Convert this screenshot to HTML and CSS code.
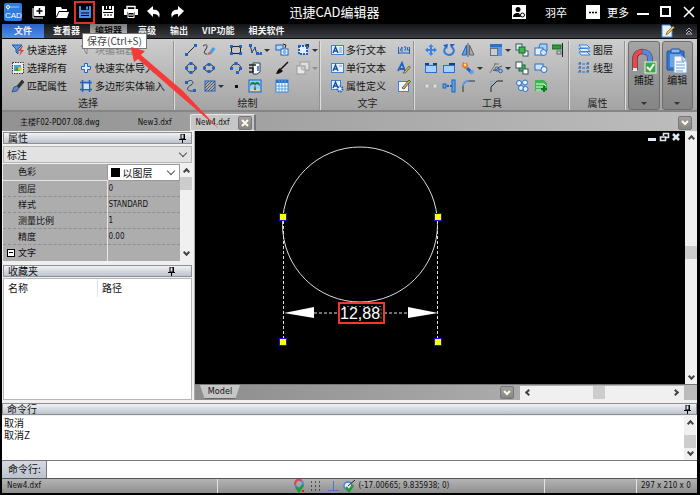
FILE: index.html
```
<!DOCTYPE html>
<html lang="zh-CN">
<head>
    <meta charset="UTF-8">
    <meta name="viewport" content="width=device-width, initial-scale=1.0">
    <title>迅捷CAD编辑器</title>
    <link rel="stylesheet" href="styles.css">
</head>
<body>
    <header class="titlebar">
        <div class="quick">
            <svg class="logo" width="18" height="18" viewBox="0 0 18 18"><rect width="18" height="18" rx="2" fill="#2f7de0"/><path d="M4 4h11M4 4v3" stroke="#9cc8ff" fill="none"/><circle cx="4" cy="4" r="1.500" fill="#2f7de0" stroke="#fff"/><text x="1" y="15" font-size="8" fill="#fff">CAD</text></svg>
            <button type="button" title="新建"><svg width="14" height="14" viewBox="0 0 14 14"><path d="M1 3v10h10" stroke="#fff" fill="none"/><rect x="2" y="1" width="11" height="10" rx="1" fill="#fff"/><path d="M7.500 3v6M4.500 6h6" stroke="#000" stroke-width="1.500"/></svg></button>
            <button type="button" title="打开"><svg width="14" height="14" viewBox="0 0 14 14"><path d="M1 12V2h5l1 2h5v2H4z" fill="#fff"/><path d="M4 7h10l-2 6H1z" fill="#fff"/><path d="M1.500 12L4 6.500h9" stroke="#000" stroke-width=".7" fill="none"/></svg></button>
            <button type="button" title="保存" class="marked"><svg width="14" height="14" viewBox="0 0 14 14"><rect x="1" y="1" width="12" height="12" fill="#4b8bf0"/><rect x="3" y="1" width="8" height="4" fill="#000"/><rect x="8" y="1.500" width="2" height="3" fill="#4b8bf0"/><path d="M3 8h8M3 10.500h8" stroke="#000"/></svg></button>
            <button type="button" title="另存为"><svg width="14" height="14" viewBox="0 0 14 14"><rect x="1" y="1" width="12" height="12" fill="#fff"/><rect x="3" y="1" width="8" height="4" fill="#000"/><rect x="5" y="1" width="1" height="3" fill="#fff"/><rect x="8" y="1" width="2" height="3" fill="#fff"/><path d="M2 7.500h10M3 10h2M6 10h2M9 10h2" stroke="#000"/></svg></button>
            <button type="button" title="打印"><svg width="14" height="14" viewBox="0 0 14 14"><path d="M3 4V1.500h8V4" stroke="#fff" fill="none" stroke-width="1.400"/><path d="M0 4h14v6h-3V7H3v3H0z" fill="#fff"/><rect x="4" y="7.500" width="6" height="5" fill="#000" stroke="#fff"/><path d="M5 10h4" stroke="#fff"/></svg></button>
            <button type="button" title="撤销"><svg width="14" height="14" viewBox="0 0 14 14"><path d="M0 6l6-5v3.500c5 0 8 3 6 8.500-.5-3-2-4-6-4v3z" fill="#fff"/></svg></button>
            <button type="button" title="重做"><svg width="14" height="14" viewBox="0 0 14 14"><path d="M14 6L8 1v3.500c-5 0-8 3-6 8.500.5-3 2-4 6-4v3z" fill="#fff"/></svg></button>
        </div>
        <h1>迅捷CAD编辑器</h1>
        <div class="account">
            <svg width="14" height="14" viewBox="0 0 14 14"><rect width="14" height="14" fill="#fff"/><circle cx="6" cy="4.500" r="2.500" fill="#000"/><path d="M1 12c0-3 2-4 4-4h2l2 4z" fill="#000"/><circle cx="10.500" cy="10" r="2" fill="#fff" stroke="#000"/></svg>
            <span class="user">羽卒</span>
            <svg width="14" height="14" viewBox="0 0 14 14"><rect width="14" height="14" fill="#fff"/><path d="M3 7.500h2M6 7.500h2M9 7.500h2" stroke="#000" stroke-width="1.500"/></svg>
            <span>更多</span>
        </div>
        <div class="window-buttons">
            <button type="button" aria-label="最小化"><svg width="12" height="12" viewBox="0 0 12 12"><path d="M0 8h12" stroke="#fff" stroke-width="2"/></svg></button>
            <button type="button" aria-label="最大化"><svg width="12" height="12" viewBox="0 0 12 12"><rect x="1" y="1" width="9" height="9" fill="none" stroke="#fff" stroke-width="2"/></svg></button>
            <button type="button" aria-label="关闭"><svg width="12" height="12" viewBox="0 0 12 12"><path d="M1 1l10 10M11 1L1 11" stroke="#fff" stroke-width="1.500"/></svg></button>
        </div>
    </header>

    <nav class="menu">
        <a href="#" class="file">文件</a>
        <a href="#">查看器</a>
        <a href="#" class="current">编辑器</a>
        <a href="#">高级</a>
        <a href="#">输出</a>
        <a href="#">VIP功能</a>
        <a href="#">相关软件</a>
        <div class="menu-end">
            <svg width="14" height="14" viewBox="0 0 14 14"><path d="M1 1h8l2 3v9H1z" fill="#e8f2ff" stroke="#4b8bd8"/><path d="M5 11l1-3 6-6 1.500 1.500-6 6z" fill="#f0c040" stroke="#5a4a20" stroke-width=".6"/></svg>
            <svg width="8" height="8" viewBox="0 0 8 8"><path d="M1 4l3-3 3 3M1 7l3-3 3 3z" fill="none" stroke="#bbb" stroke-width=".9"/></svg>
        </div>
    </nav>

    <section class="ribbon">
        <div class="group group-select">
            <div class="tools">
                <button type="button"><svg width="14" height="14" viewBox="0 0 14 14"><path d="M1 2h10L7 6v5L5 9V6z" fill="#4f9be0" stroke="#1c5ba6"/><path d="M11 3L7 8h3l-2 5 5-6h-3l2-4z" fill="#e23a3a"/></svg>快速选择</button>
                <button type="button" disabled><svg width="14" height="14" viewBox="0 0 14 14"><path d="M2 3h9L8 7v4L6 9V7z" fill="none" stroke="#888"/></svg>块编辑器</button>
                <button type="button"><svg width="14" height="14" viewBox="0 0 14 14"><rect x="1.500" y="1.500" width="11" height="11" fill="#eee" stroke="#333" stroke-dasharray="1.500 1"/><rect x="3" y="4" width="7" height="6" fill="#49a2e8"/><path d="M3 10l3-4 3 4z" fill="#3a9a3a"/><circle cx="9" cy="8" r="2" fill="#e6c830"/></svg>选择所有</button>
                <button type="button"><svg width="14" height="14" viewBox="0 0 14 14"><path d="M5.500 2.500h3v3h3v3h-3v3h-3v-3h-3v-3h3z" fill="#dcecff" stroke="#2266c0"/></svg>快速实体导入</button>
                <button type="button"><svg width="14" height="14" viewBox="0 0 14 14"><path d="M6 7l5-6 2 2-5 6z" fill="#333" stroke="#111" stroke-width=".5"/><path d="M1 13l2-5 3-1 2 2-2 3z" fill="#5c86c4" stroke="#263f6e" stroke-width=".7"/></svg>匹配属性</button>
                <button type="button"><svg width="14" height="14" viewBox="0 0 14 14"><path d="M3.500 1v12M10.500 1v12M1 3.500h12M1 10.500h12" stroke="#1f62c4" stroke-width="1.500"/><rect x="5" y="5" width="5" height="5" fill="#cfe4fb"/></svg>多边形实体输入</button>
            </div>
            <div class="caption">选择</div>
        </div>

        <div class="group group-draw">
            <div class="tools">
                <button type="button" title="直线"><svg width="14" height="14" viewBox="0 0 14 14"><path d="M3 11l8-8" stroke="#222"/><rect x="1" y="10" width="3" height="3" fill="#1f62c4"/><rect x="10" y="1" width="3" height="3" fill="#1f62c4"/></svg></button>
                <button type="button" title="手绘"><svg width="14" height="14" viewBox="0 0 14 14"><path d="M1 3c4-3 5 0 3 3s-3 5 1 5" stroke="#333" fill="none"/><path d="M7 9l4-5 2.500 2-4 5z" fill="#4b9be8"/><path d="M5 12l2-3 2.500 2z" fill="#e24a3a"/></svg></button>
                <button type="button" title="矩形"><svg width="14" height="14" viewBox="0 0 14 14"><rect x="2.500" y="3.500" width="9" height="7" fill="none" stroke="#222"/><path d="M1 2h3v3H1zM10 2h3v3h-3zM1 9h3v3H1zM10 9h3v3h-3z" fill="#1f62c4"/></svg></button>
                <button type="button" title="多段线"><svg width="14" height="14" viewBox="0 0 14 14"><path d="M2 2l2 7 3-4 2 6h4" stroke="#333" fill="none"/><path d="M1 1h3v3H1zM3 8h2v2H3zM6 4h2v2H6zM8 9h3v3H8zM12 9h2v3h-2z" fill="#1f62c4"/></svg><i class="caret"></i></button>
                <button type="button" title="块"><svg width="14" height="14" viewBox="0 0 14 14"><rect x="1" y="2" width="7" height="5" fill="#b8d8f8" stroke="#1f62c4"/><rect x="6" y="6" width="7" height="6" fill="#fff" stroke="#1f62c4"/><circle cx="9.500" cy="9" r="2" fill="#77b4ee"/><path d="M8 1l3 1-1 3" stroke="#223" fill="none"/></svg></button>
                <button type="button" title="云线"><svg width="14" height="14" viewBox="0 0 14 14"><rect x="3" y="3" width="8" height="8" fill="#e5f1fd" stroke="#1f62c4" stroke-width="2" stroke-dasharray="2 1"/><path d="M9 1l4 4V1z" fill="#15397a"/></svg><i class="caret"></i></button>

                <button type="button" title="圆"><svg width="14" height="14" viewBox="0 0 14 14"><circle cx="7" cy="7" r="4.500" fill="none" stroke="#333"/><path d="M5.500 1h3v3h-3zM5.500 10h3v3h-3zM1 5.500h3v3H1zM10 5.500h3v3h-3z" fill="#1f62c4"/></svg></button>
                <button type="button" title="椭圆"><svg width="14" height="14" viewBox="0 0 14 14"><ellipse cx="7" cy="7" rx="5" ry="3.500" fill="none" stroke="#333"/><path d="M5.500 2h3v3h-3zM5.500 9h3v3h-3zM1 5.500h3v3H1zM10 5.500h3v3h-3z" fill="#1f62c4"/></svg></button>
                <button type="button" title="圆弧"><svg width="14" height="14" viewBox="0 0 14 14"><path d="M2 8c0-7 10-7 10 0l-3 3" fill="none" stroke="#333"/><path d="M5.500 1h3v3h-3zM1 6h3v3H1zM10 6h3v3h-3zM7 10h3v3H7z" fill="#1f62c4"/></svg></button>
                <button type="button" title="插入块"><svg width="14" height="14" viewBox="0 0 14 14"><path d="M5 2h7v9l-3 2H5z" fill="#fff" stroke="#245"/><path d="M1 4h7M1 7h4v4H1" stroke="#222" stroke-width="1.500" fill="none"/><path d="M10 5v5" stroke="#1f62c4" stroke-width="1.500"/></svg></button>
                <button type="button" title="画笔"><svg width="14" height="14" viewBox="0 0 14 14"><path d="M6 8l7-7" stroke="#111" stroke-width="1.500"/><path d="M1 13c1-2 1-4 4-6l3 3c-2 2-4 3-7 3z" fill="#111"/></svg></button>
                <button type="button" title="区域" disabled><svg width="14" height="14" viewBox="0 0 14 14"><rect x="4" y="1" width="9" height="8" fill="#ddd" stroke="#999"/><rect x="1" y="5" width="8" height="8" fill="#e8e8e8" stroke="#999"/><circle cx="7" cy="7" r="2" fill="#ccc" stroke="#aaa"/></svg><i class="caret"></i></button>

                <button type="button" title="样条"><svg width="14" height="14" viewBox="0 0 14 14"><path d="M3 3c5-4 8 1 4 3s-5 6 0 6h3" fill="none" stroke="#346"/><path d="M1 2h3v3H1zM9 10h3v3H9z" fill="#1f62c4"/></svg></button>
                <button type="button" title="填充"><svg width="14" height="14" viewBox="0 0 14 14"><rect x="3" y="2" width="10" height="10" fill="#a9adb5" stroke="#1f62c4"/><path d="M3 6l4-4M3 9l7-7M3 12l10-10M6 12l7-7M9 12l4-4" stroke="#444" stroke-width=".8"/></svg><i class="caret"></i></button>
                <button type="button" title="点"><svg width="14" height="14" viewBox="0 0 14 14"><rect x="6" y="6" width="3" height="3" fill="#111"/></svg></button>
                <button type="button" title="图像"><svg width="14" height="14" viewBox="0 0 14 14"><rect x="1" y="1" width="12" height="12" fill="#8fd0f5" stroke="#1f62c4"/><path d="M2 10h10v2H2z" fill="#ead38a"/><path d="M6 11l1-6 1 6z" fill="#6b4a20"/><path d="M2 7c0-4 3-5 5-3 2-2 5-1 5 3-2-2-3-2-5-1-2-1-3-1-5 1z" fill="#167a3a"/></svg></button>
                <button type="button" title="表格"><svg width="14" height="14" viewBox="0 0 14 14"><rect x="1" y="1" width="12" height="12" fill="#fff" stroke="#3b82d8"/><rect x="1" y="1" width="12" height="3" fill="#2a6fc9"/><path d="M4 1v12M7 1v12M10 1v12M1 7h12M1 10h12" stroke="#5a9ee6"/></svg></button>
            </div>
            <div class="caption">绘制</div>
        </div>

        <div class="group group-text">
            <div class="tools">
                <button type="button"><svg width="14" height="14" viewBox="0 0 14 14"><rect x="1.500" y="2.500" width="12" height="9" fill="#e8f2ff" stroke="#3b82d8"/><path d="M3 10l2.500-6L8 10M4 8h3" stroke="#1550a8" stroke-width="1.400" fill="none"/><path d="M9 5h3M9 7h3M9 9h3" stroke="#6aa4e8"/></svg>多行文本</button>
                <button type="button" title="文字查找"><svg width="14" height="14" viewBox="0 0 14 14"><path d="M1.500 4v7M12.500 4v7M2 10h10" stroke="#1f62c4"/><path d="M3 8l2-4v5M7 4h2L8 7v1M11 4l-1 3h2" stroke="#1f62c4" fill="none"/></svg></button>
                <button type="button"><svg width="14" height="14" viewBox="0 0 14 14"><rect x="1.500" y="2.500" width="12" height="9" fill="#e8f2ff" stroke="#3b82d8"/><path d="M3 10l2.500-6L8 10M4 8h3" stroke="#1550a8" stroke-width="1.400" fill="none"/><path d="M9 5h3" stroke="#6aa4e8"/></svg>单行文本</button>
                <button type="button" title="文字样式"><svg width="14" height="14" viewBox="0 0 14 14"><path d="M1 10l4-8 3 8M3 8h4" stroke="#1f62c4" stroke-width="1.800" fill="none"/><path d="M6 12l6-7 1.500 1-5 6z" fill="#e0b030" stroke="#444" stroke-width=".6"/></svg></button>
                <button type="button"><svg width="14" height="14" viewBox="0 0 14 14"><rect x="1.500" y="1.500" width="9" height="9" fill="#e8f2ff" stroke="#3b82d8"/><path d="M3 9l2.500-6L8 9M4 7h3" stroke="#1550a8" stroke-width="1.400" fill="none"/><circle cx="10" cy="10" r="2.500" fill="#fff" stroke="#1f62c4" stroke-width="2" stroke-dasharray="1.500 .7"/></svg>属性定义</button>
                <button type="button" title="编辑属性"><svg width="14" height="14" viewBox="0 0 14 14"><rect x="1.500" y="2.500" width="10" height="10" fill="#f4f9ff" stroke="#3b82d8"/><path d="M5 9l7-8 1.500 1.500L7 10z" fill="#e0b030" stroke="#333" stroke-width=".7"/></svg></button>
            </div>
            <div class="caption">文字</div>
        </div>

        <div class="group group-modify">
            <div class="tools">
                <button type="button" title="移动"><svg width="14" height="14" viewBox="0 0 14 14"><path d="M7 1l2.500 3H8v2h2V4.500L13 7l-3 2.500V8H8v2h1.500L7 13l-2.500-3H6V8H4v1.500L1 7l3-2.500V6h2V4H4.500z" fill="#3b82e8"/></svg></button>
                <button type="button" title="旋转"><svg width="14" height="14" viewBox="0 0 14 14"><path d="M3.500 4.500c-3 4 0 7.500 3.500 7.500s7-4 3-8" fill="none" stroke="#2f78dc" stroke-width="2"/><path d="M1 2l5-1-1 5zM8 1h5l-4 4z" fill="#1f62c4"/></svg></button>
                <button type="button" title="镜像"><svg width="14" height="14" viewBox="0 0 14 14"><path d="M5.500 2v10H1z" fill="#5da4ee" stroke="#1f62c4"/><path d="M8.500 2v10H13z" fill="#aaa" stroke="#666"/><path d="M7 0v14" stroke="#222" stroke-width=".7"/></svg></button>
                <button type="button" title="缩放"><svg width="14" height="14" viewBox="0 0 14 14"><rect x="1" y="1" width="12" height="12" fill="#5a9ae4"/><path d="M1 1h12v3H1z" fill="#2a6fc9"/><rect x="1.500" y="5.500" width="7" height="7" fill="#ccc" stroke="#333" stroke-dasharray="1 1"/></svg><i class="caret"></i></button>
                <button type="button" title="前置"><svg width="14" height="14" viewBox="0 0 14 14"><rect x="1" y="1" width="6" height="6" fill="#e8f2ea" stroke="#356"/><rect x="8" y="8" width="5" height="5" fill="#fff" stroke="#356"/><rect x="4" y="4" width="6" height="6" fill="#3fb650" stroke="#156a25"/></svg></button>
                <button type="button" title="复制对象"><svg width="14" height="14" viewBox="0 0 14 14"><path d="M6 1h7v7H4z" fill="#a8d0f8" stroke="#2a6fc9"/><rect x="1" y="5" width="8" height="7" fill="#e4f0fd" stroke="#2a6fc9"/><circle cx="9.500" cy="9.500" r="3" fill="#cfe4fb" stroke="#2a6fc9"/></svg></button>
                <button type="button" title="对齐"><svg width="14" height="14" viewBox="0 0 14 14"><path d="M10.500 0v14" stroke="#222"/><rect x="0" y="2" width="9" height="4" fill="#2d9a3c" stroke="#156a25"/><rect x="5" y="8" width="4" height="3" fill="#ccc" stroke="#666"/></svg></button>

                <button type="button" title="打断"><svg width="14" height="14" viewBox="0 0 14 14"><rect x="1.500" y="4.500" width="11" height="7" fill="#a8d0f8" stroke="#2a6fc9"/><path d="M1 3h4M9 3h4" stroke="#143e86" stroke-width="2"/></svg></button>
                <button type="button" title="合并"><svg width="14" height="14" viewBox="0 0 14 14"><rect x="1.500" y="4.500" width="11" height="7" fill="#a8d0f8" stroke="#2a6fc9"/><path d="M7 3h6" stroke="#143e86" stroke-width="2"/></svg></button>
                <button type="button" title="分解"><svg width="14" height="14" viewBox="0 0 14 14"><path d="M2 1l3 2 1-2 1 4-3 3-3-3z" fill="#e8672c"/><circle cx="4" cy="4" r="1.500" fill="#ffe070"/><path d="M6 7l5 5" stroke="#1f62c4" stroke-width="3"/><circle cx="11" cy="11" r="2" fill="#5da4ee"/></svg><i class="caret"></i></button>
                <button type="button" title="修剪"><svg width="14" height="14" viewBox="0 0 14 14"><path d="M1 12L7 2M5 3h5" stroke="#777"/><circle cx="8" cy="8" r="2" fill="none" stroke="#1f62c4"/><circle cx="11.500" cy="10" r="1.800" fill="none" stroke="#1f62c4"/><path d="M4 9c3 2 5-3 9-4" stroke="#444" fill="none"/></svg><i class="caret"></i></button>
                <button type="button" title="后置"><svg width="14" height="14" viewBox="0 0 14 14"><rect x="4" y="4" width="6" height="6" fill="#3fb650" stroke="#156a25"/><rect x="1" y="1" width="6" height="6" fill="#fff" stroke="#356"/><rect x="8" y="8" width="5" height="5" fill="#fff" stroke="#356"/></svg></button>
                <button type="button" title="组"><svg width="14" height="14" viewBox="0 0 14 14"><rect x="1" y="3" width="8" height="6" fill="#cfe4fb" stroke="#2a6fc9"/><circle cx="10" cy="8.500" r="3" fill="#e4f0fd" stroke="#2a6fc9"/></svg></button>
                <span></span>

                <button type="button" title="拉伸" disabled><svg width="14" height="14" viewBox="0 0 14 14"><path d="M1 5h4v4H1zM9 5h4v4H9z" fill="#ddd" stroke="#aaa"/><path d="M6 7h3" stroke="#aaa" stroke-dasharray="1 1"/></svg></button>
                <button type="button" title="延伸"><svg width="14" height="14" viewBox="0 0 14 14"><rect x="1" y="5" width="3" height="4" fill="#5da4ee" stroke="#1f62c4"/><path d="M5 7h5" stroke="#1f62c4" stroke-width="2" stroke-dasharray="2 1"/><rect x="10" y="1" width="3" height="12" fill="#5da4ee" stroke="#1f62c4"/></svg></button>
                <button type="button" title="圆角"><svg width="14" height="14" viewBox="0 0 14 14"><path d="M2 13V8c0-3 2-6 6-6h6" stroke="#333" fill="none"/><path d="M2 7c0-3 2-5 6-5" stroke="#4b9bf0" stroke-width="1.500" fill="none"/></svg></button>
                <button type="button" title="倒角"><svg width="14" height="14" viewBox="0 0 14 14"><path d="M2 13V8l6-6h6" stroke="#222" fill="none"/><path d="M2 7V2h5" stroke="#4b9bf0" fill="none" stroke-dasharray="1 1"/></svg></button>
                <button type="button" title="阵列"><svg width="14" height="14" viewBox="0 0 14 14"><g fill="#e4f0fd" stroke="#2a6fc9"><circle cx="4" cy="4" r="2.500"/><circle cx="10" cy="3.500" r="2.500"/><circle cx="6" cy="9" r="2.500"/><circle cx="10.500" cy="10" r="2.500"/></g></svg></button>
                <button type="button" title="添加图层"><svg width="14" height="14" viewBox="0 0 14 14"><path d="M1 1h9l3 3v8H1z" fill="#3fb650"/><path d="M2 5h8l2 2M2 8h8M2 11h6" stroke="#e7ffe9" fill="none"/><path d="M10 7v6M7 10h6" stroke="#0f7a22" stroke-width="2"/></svg></button>
            </div>
            <div class="caption">工具</div>
        </div>

        <div class="group group-props">
            <div class="tools">
                <button type="button"><svg width="14" height="14" viewBox="0 0 14 14"><g fill="#e4f0fd" stroke="#3b82d8"><path d="M2 9h8l3 3H4z"/><path d="M2 5.500h8l3 3H4z"/><path d="M2 2h8l3 3H4z"/></g></svg>图层</button>
                <button type="button"><svg width="14" height="14" viewBox="0 0 14 14"><path d="M1 3h12M1 7h12M1 11h12" stroke="#2a6fc9" stroke-dasharray="3 1"/><path d="M3 1v12M11 1v12" stroke="#2a6fc9" stroke-width="1.500" stroke-dasharray="2 2"/></svg>线型</button>
            </div>
            <div class="caption">属性</div>
        </div>

        <div class="big-buttons">
            <button type="button"><svg width="26" height="26" viewBox="0 0 26 26"><path d="M4 22V11C4 1 19 1 19 11v5" fill="none" stroke="#6d2a38" stroke-width="5.500"/><path d="M4 22V11C4 5 8 3.500 11.500 3.500" fill="none" stroke="#e5484d" stroke-width="4"/><path d="M11.500 3.500C15 3.500 19 5 19 11v5" fill="none" stroke="#4b8be0" stroke-width="4.500"/><path d="M2 20h4v3H2z" fill="#eee"/><rect x="14" y="14" width="11" height="11" fill="#39a845" stroke="#e8f8e8"/><path d="M16 19l3 3 4-6" stroke="#fff" stroke-width="2" fill="none"/></svg>捕捉<i class="caret"></i></button>
            <button type="button"><svg width="26" height="26" viewBox="0 0 26 26"><rect x="3" y="3" width="17" height="19" rx="1" fill="#3579cf" stroke="#1c4f9c"/><rect x="7" y="1" width="9" height="4" rx="1" fill="#8ab8ee" stroke="#1c4f9c"/><path d="M6 6h11v13H6z" fill="#6aa5e8"/><path d="M10 8h8l5 5v12H10z" fill="#f4f9ff" stroke="#7a9cc8"/><path d="M18 8v5h5" fill="#cfe0f5" stroke="#7a9cc8"/><path d="M12 14h8M12 17h9M12 20h9M12 23h7" stroke="#6b9fd8"/></svg>编辑<i class="caret"></i></button>
        </div>
    </section>

    <div class="doc-tabs">
        <a href="#" class="doc-first">主楼F02-PD07.08.dwg</a>
        <a href="#">New3.dxf</a>
        <div class="doc-tab-open"><a href="#">New4.dxf</a><button type="button" class="small-button" aria-label="关闭标签"><svg width="8" height="8" viewBox="0 0 8 8"><path d="M1 1l6 6M7 1L1 7" stroke="#fffbe8" stroke-width="2"/></svg></button></div>
        <button type="button" class="small-button tab-list" aria-label="标签列表"><svg width="8" height="8" viewBox="0 0 8 8"><path d="M1 2l3 3 3-3" fill="none" stroke="#fffbe0" stroke-width="2"/></svg></button>
    </div>

    <main class="workspace">
        <aside class="side">
            <div class="panel-head"><h2>属性</h2><svg width="7" height="9" viewBox="0 0 7 9"><path d="M2 0h3.500v5H2zM0 5.500h7M3.500 5v4M5 0v5" stroke="#000" fill="none"/></svg></div>
            <div class="dropdown object-type">
                <select aria-label="对象"><option>标注</option></select>
            </div>
            <div class="props">
                <table>
                    <tr><th><label for="color">色彩</label></th><td class="color-cell"><div class="dropdown"><span class="swatch"></span><select id="color"><option>以图层</option></select></div></td></tr>
                    <tr><th>图层</th><td>0</td></tr>
                    <tr><th>样式</th><td>STANDARD</td></tr>
                    <tr><th>测量比例</th><td>1</td></tr>
                    <tr><th>精度</th><td>0.00</td></tr>
                    <tr class="section"><th><span class="minus"></span>文字</th><td></td></tr>
                </table>
                <div class="vscroll"><i class="up"></i><b></b><i class="down"></i></div>
            </div>
            <div class="panel-head favourites"><h2>收藏夹</h2><svg width="7" height="9" viewBox="0 0 7 9"><path d="M2 0h3.500v5H2zM0 5.500h7M3.500 5v4M5 0v5" stroke="#000" fill="none"/></svg></div>
            <div class="fav-list">
                <table>
                    <tr><th>名称</th><th>路径</th></tr>
                </table>
            </div>
        </aside>

        <section class="viewer">
            <div class="canvas-row">
                <div class="canvas">
                    <svg class="drawing" width="100%" height="100%">
                        <circle cx="165" cy="93.500" r="77.500" fill="none" stroke="#ddd"/>
                        <path d="M88.500 90v120M242.500 90v120M119 182h96" fill="none" stroke="#e0e0e0" stroke-dasharray="3 2"/>
                        <path d="M89 182l30-6v11zM243 182l-30-6v11z" fill="#fff"/>
                        <g fill="#ff0" stroke="#1414d8">
                            <rect x="84.500" y="82.500" width="7" height="7"/>
                            <rect x="239.500" y="82.500" width="7" height="7"/>
                            <rect x="84.500" y="207.500" width="7" height="7"/>
                            <rect x="239.500" y="207.500" width="7" height="7"/>
                        </g>
                        <rect x="144" y="172" width="45" height="20" fill="#000" stroke="#f03830" stroke-width="2"/>
                        <path d="M148 175.500h38v15" fill="none" stroke="#777" stroke-dasharray="2 2"/>
                        <text x="145" y="188" font-size="16" fill="#fff">12,88</text>
                    </svg>
                    <div class="mdi">
                        <svg width="34" height="10" viewBox="0 0 34 10"><path d="M1 7.500h8" stroke="#dfe8f0" stroke-width="3"/><path d="M16.500 4V1.500h5v4H19M13.500 5h5v3.500h-5z" stroke="#dfe8f0" fill="none" stroke-width="1.600"/><path d="M26 2l6 6M32 2l-6 6" stroke="#dfe8f0" stroke-width="2.500"/></svg>
                    </div>
                </div>
                <div class="vscroll"><i class="up"></i><b></b><i class="down"></i></div>
            </div>
            <div class="model-bar">
                <a href="#" class="model-tab">Model</a>
                <button type="button" class="small-button" aria-label="布局列表"><svg width="8" height="8" viewBox="0 0 8 8"><path d="M1 2l3 3 3-3" fill="none" stroke="#fffbe0" stroke-width="2"/></svg></button>
                <div class="hscroll"><i class="left"></i><b></b><i class="right"></i></div>
            </div>
        </section>
    </main>

    <section class="command">
        <div class="panel-head"><h2>命令行</h2><svg width="7" height="9" viewBox="0 0 7 9"><path d="M2 0h3.500v5H2zM0 5.500h7M3.500 5v4M5 0v5" stroke="#000" fill="none"/></svg></div>
        <div class="history">
            <div class="lines">取消<br>取消Z</div>
            <div class="vscroll"><i class="up"></i><b></b><i class="down"></i></div>
        </div>
        <div class="prompt">
            <label for="cmd">命令行:</label>
            <input type="text" id="cmd">
        </div>
    </section>

    <footer class="status">
        <span class="status-file">New4.dxf</span>
        <div class="status-mid">
            <svg width="12" height="14" viewBox="0 0 12 14"><circle cx="6" cy="5" r="4" fill="none" stroke="#4b8be0" stroke-width="2"/><path d="M2 6c0-6 5-6 6-4" fill="none" stroke="#e04848" stroke-width="2"/><path d="M3 8l3 4 4-6" stroke="#1d9a36" stroke-width="2.500" fill="none"/><rect x="9" y="11" width="2" height="2" fill="#d22"/></svg>
            <svg width="14" height="14" viewBox="0 0 14 14"><path d="M2 3h11M2 7h11M2 11h11" stroke="#333" stroke-width="1.400" stroke-dasharray="1 3"/></svg>
            <svg width="12" height="14" viewBox="0 0 12 14"><path d="M6.500 2v9M1 11.500h11" stroke="#3f7fc4"/></svg>
            <svg width="12" height="14" viewBox="0 0 12 14"><circle cx="5" cy="7" r="4" fill="#eef" stroke="#3b82d8" stroke-width="1.500"/><path d="M3 8l3 4 4-6" stroke="#1d9a36" stroke-width="2.500" fill="none"/><path d="M5 7l7-6" stroke="#222"/></svg>
            <span>(-17.00665; 9.835938; 0)</span>
        </div>
        <span class="status-gap"></span>
        <span class="status-size">297 x 210 x 0</span>
    </footer>

    <div class="tooltip">保存(Ctrl+S)</div>
    <svg class="pointer" width="90" height="84" viewBox="0 0 90 84"><path d="M1 1l14 4-4 4 42 36 36 38-41-35L8 13l-4 3z" fill="#f43b38"/></svg>
</body>
</html>
```
FILE: styles.css
```
* {
    box-sizing: border-box;
}

body {
    margin: 0;
    padding: 0 3px 2px 2px;
    min-height: 100vh;
    display: flex;
    flex-direction: column;
    background: #000;
    color: #111;
    font-family: "Noto Sans CJK SC", sans-serif;
    font-size: 10px;
    line-height: 12px;
    position: relative;
}

a {
    color: inherit;
    text-decoration: none;
}

button {
    border: 0;
    padding: 0;
    background: none;
    color: inherit;
    font: inherit;
    display: flex;
    align-items: center;
}

svg {
    flex: none;
}

h1, h2 {
    margin: 0;
    font-weight: normal;
}

/* title bar */
.titlebar {
    height: 24px;
    display: grid;
    grid-template-columns: 1fr auto 1fr;
    align-items: center;
    color: #fff;
}

.titlebar h1 {
    font-size: 13px;
    line-height: 24px;
    grid-column: 1 / 4;
    grid-row: 1;
    text-align: center;
    padding-right: 30px;
}

.quick {
    display: flex;
    align-items: center;
    grid-column: 1;
    grid-row: 1;
    padding-left: 2px;
    z-index: 1;
}

.quick .logo {
    margin-right: 5px;
    font-family: "Liberation Sans", sans-serif;
}

.quick button {
    width: 23px;
    height: 24px;
    justify-content: center;
}

.quick .marked {
    width: 21px;
    height: 23px;
    margin: 0 1px;
    border: 2px solid #e0302c;
}

.account {
    grid-column: 3;
    grid-row: 1;
    display: flex;
    align-items: center;
    justify-content: flex-end;
    gap: 7px;
    font-size: 11px;
    padding-right: 68px;
}

.account .user {
    margin: 0 12px;
}

.window-buttons {
    grid-column: 3;
    grid-row: 1;
    justify-self: end;
    display: flex;
    gap: 11px;
    padding-right: 2px;
}

/* menu */
.menu {
    height: 15px;
    display: flex;
    background: linear-gradient(#141518, #3b3d42);
    border-bottom: 1px solid #0c0c0c;
    color: #f2f2f2;
    font-size: 9px;
    font-weight: bold;
    line-height: 14px;
}

.menu a {
    padding: 0 7px;
}

.menu .file {
    width: 42px;
    margin-right: 2px;
    text-align: center;
    padding: 0;
    background: linear-gradient(#2b62c4, #4d8eea);
}

.menu .current {
    background: linear-gradient(#7a7a7a, #c4c4c4);
    color: #111;
    padding: 0 5px;
    margin: 0 4px 0 3px;
}

.menu-end {
    margin-left: auto;
    display: flex;
    align-items: center;
    gap: 10px;
    padding-right: 4px;
}

/* ribbon */
.ribbon {
    display: flex;
    background: linear-gradient(#cdcdcd, #a4a4a4);
    padding-top: 2px;
    height: 71px;
}

.group {
    display: flex;
    flex-direction: column;
    flex: none;
    border-right: 1px solid #dedede;
    box-shadow: inset -1px 0 #929292;
}

.group-select { width: 173px; }
.group-draw { width: 146px; }
.group-text { width: 94px; }
.group-modify { width: 155px; }
.group-props { width: 56px; }

.tools {
    display: grid;
    grid-auto-rows: 18px;
    align-items: center;
    padding-left: 7px;
    white-space: nowrap;
    height: 54px;
}

.tools button {
    gap: 2px;
    margin-left: 2px;
}

.tools button:disabled {
    color: #858585;
}

.group-select .tools { grid-template-columns: 68px 1fr; }
.group-draw .tools { grid-template-columns: 18px 27px 19px 27px 21px 1fr; }
.group-text .tools { grid-template-columns: 67px 1fr; }
.group-modify .tools { grid-template-columns: 18px 19px 28px 26px 19px 18px 1fr; }
.group-props .tools { padding-left: 5px; }

.caption {
    text-align: center;
    line-height: 15px;
    color: #222;
}

.caret {
    border: 3px solid transparent;
    border-top-color: #333;
    border-bottom: 0;
}

button:disabled .caret {
    border-top-color: #909090;
}

.big-buttons {
    display: flex;
    gap: 2px;
    flex: 1;
    padding: 0 4px 0 2px;
}

.big-buttons button {
    flex: 1;
    flex-direction: column;
    border: 1px solid #6e6e6e;
    border-radius: 3px;
    background: linear-gradient(#a4a4a4, #858585);
    padding: 6px 0 4px;
}

.big-buttons .caret {
    margin-top: auto;
}

/* open documents */
.doc-tabs {
    height: 21px;
    display: flex;
    align-items: flex-end;
    background: linear-gradient(to right, #929292, #bdbdbd);
    border-top: 2px solid #858585;
    font-family: "DejaVu Sans Condensed", "Noto Sans CJK SC", sans-serif;
    font-size: 8px;
    line-height: 16px;
    padding-right: 5px;
}

.doc-tabs > a {
    padding: 0 18px;
}

.doc-tabs .doc-first {
    padding-right: 20px;
}

.doc-tab-open {
    display: flex;
    align-items: center;
    justify-content: space-between;
    width: 66px;
    height: 17px;
    background: #c6c6c6;
    border: 1px solid #e6e6e6;
    border-right: 2px solid #777;
    border-radius: 2px 2px 0 0;
    padding: 0 2px 0 5px;
}

.small-button {
    width: 14px;
    height: 14px;
    justify-content: center;
    border: 1px solid #777;
    border-radius: 2px;
    background: linear-gradient(#a0a0a0, #868686);
}

.tab-list {
    margin: 0 0 1px auto;
}

/* workspace */
.workspace {
    flex: 1;
    display: flex;
    background: #f0f0f0;
    min-height: 272px;
    padding-bottom: 3px;
}

.side {
    flex: none;
    width: 193px;
    display: flex;
    flex-direction: column;
    padding: 1px 2px 0 1px;
    border-right: 1px solid #aaa;
}

.panel-head {
    display: flex;
    justify-content: space-between;
    align-items: center;
    height: 12px;
    padding: 0 5px 0 4px;
    background: linear-gradient(#f0f2f4, #bcc3ce);
    border: 1px solid #8d8f93;
}

.panel-head h2 {
    font-size: 10px;
    line-height: 10px;
}

.dropdown {
    display: flex;
    align-items: center;
    padding: 0 5px 0 3px;
}

.dropdown::after {
    content: "";
    width: 5px;
    height: 5px;
    margin-top: -3px;
    border: solid #555;
    border-width: 0 1px 1px 0;
    transform: rotate(45deg);
}

select {
    appearance: none;
    flex: 1;
    min-width: 0;
    border: 0;
    border-radius: 0;
    font: inherit;
    color: inherit;
    padding: 0;
    background: transparent;
}

.object-type {
    margin-top: 2px;
    height: 17px;
    border: 1px solid #b5b5b5;
    background: #e2e2e2;
}

.props {
    display: flex;
    margin-top: 1px;
    height: 96px;
}

.props table {
    flex: 1;
    border-collapse: collapse;
    background: #adadad;
    table-layout: fixed;
}

.props th, .props td {
    height: 16px;
    padding: 0 0 0 15px;
    border-bottom: 1px dashed #8f8f8f;
    text-align: left;
    font-weight: normal;
    font-size: 9px;
    line-height: 12px;
}

.props th {
    width: 104px;
}

.props td {
    border-left: 1px solid #e6e6e6;
    padding-left: 1px;
    font-family: "DejaVu Sans Condensed", sans-serif;
    font-size: 8px;
}

.props tr:first-child th {
    border-bottom: 1px solid #e6e6e6;
}

.props .section th {
    padding-left: 4px;
    border-bottom: 0;
}

.props .section td {
    border-bottom: 0;
}

.props .color-cell {
    background: #fff;
    border: 1px solid #999;
    padding: 0;
    font-family: "Noto Sans CJK SC", sans-serif;
    font-size: 10px;
}

.color-cell .dropdown {
    height: 14px;
}

.swatch {
    width: 9px;
    height: 9px;
    margin-right: 3px;
    background: #000;
}

.minus {
    display: inline-block;
    width: 8px;
    height: 8px;
    margin-right: 3px;
    border: 1px solid #000;
    background: linear-gradient(#000, #000) center / 4px 1px no-repeat #fff;
    vertical-align: -1px;
}

.favourites {
    margin-top: 5px;
    padding-right: 16px;
}

.fav-list {
    flex: 1;
    margin-top: 1px;
    background: #fff;
    border: 1px solid #b4b7bd;
}

.fav-list table {
    width: 100%;
    border-collapse: collapse;
}

.fav-list th {
    padding: 0 4px;
    width: 50%;
    height: 18px;
    text-align: left;
    font-weight: normal;
}

.fav-list th + th {
    border-left: 1px solid #e4e4e4;
}

/* scroll bars */
.vscroll, .hscroll {
    flex: none;
    display: flex;
    align-items: center;
    justify-content: space-between;
    background: #f0f0f0;
}

.vscroll {
    width: 12px;
    flex-direction: column;
    padding: 5px 0;
}

.vscroll b, .hscroll b {
    width: 12px;
    height: 13px;
    background: #cdcdcd;
}

.canvas-row .vscroll b {
    margin-bottom: 10px;
}

.props .vscroll b {
    margin: 3px 0 auto;
}

.vscroll i, .hscroll i {
    width: 5px;
    height: 5px;
    border: solid #444;
    border-width: 2px 0 0 2px;
    transform: rotate(45deg);
}

.vscroll .down {
    transform: rotate(225deg);
}

.hscroll .left {
    transform: rotate(-45deg);
}

.hscroll .right {
    transform: rotate(135deg);
}

/* drawing */
.viewer {
    flex: 1;
    display: flex;
    flex-direction: column;
    min-width: 0;
}

.canvas-row {
    flex: 1;
    display: flex;
}

.canvas {
    flex: 1;
    position: relative;
    background: #000;
}

.drawing {
    position: absolute;
    inset: 0;
    font-family: "Liberation Sans", sans-serif;
}

.mdi {
    position: absolute;
    top: 1px;
    right: 4px;
}

.model-bar {
    height: 16px;
    display: flex;
    align-items: center;
    background: linear-gradient(to right, #8d8d8d, #bcbcbc);
    border-top: 1px solid #777;
    padding: 0 13px 0 5px;
}

.model-tab {
    align-self: flex-start;
    width: 40px;
    height: 14px;
    text-align: center;
    font-family: "DejaVu Sans Condensed", sans-serif;
    font-size: 9px;
    line-height: 12px;
    background: #c6c6c6;
    border-bottom: 1px solid #666;
    clip-path: polygon(0 0, 100% 0, 88% 100%, 12% 100%);
}

.model-bar .small-button {
    margin: 0 6px 0 auto;
    height: 13px;
}

.hscroll {
    width: 164px;
    height: 14px;
    padding: 0 6px;
}

.hscroll b {
    margin-right: 6px;
}

/* command line */
.command {
    background: #f0f0f0;
}

.history {
    display: flex;
    justify-content: space-between;
    height: 44px;
    margin-top: 1px;
    padding: 0 1px 0 2px;
    background: #fff;
}

.lines {
    padding-top: 1px;
}

.history .vscroll b {
    margin-top: 7px;
}

.prompt {
    display: flex;
    height: 18px;
    border-top: 1px solid #777;
}

.prompt label {
    width: 45px;
    padding-left: 6px;
    line-height: 16px;
    background: linear-gradient(#d4d9e2, #bcc3cf);
    border-right: 1px solid #777;
}

.prompt input {
    flex: 1;
    border: 0;
    padding: 0 3px;
    font: inherit;
    background: #fff;
}

/* status bar */
.status {
    display: flex;
    height: 15px;
    background: linear-gradient(#b4b4b4, #8e8e8e);
    border-top: 1px solid #555;
    font-family: "DejaVu Sans Condensed", sans-serif;
    font-size: 8px;
    line-height: 13px;
}

.status > * + * {
    border-left: 1px solid #e2e2e2;
}

.status-file {
    width: 215px;
    padding-left: 5px;
}

.status-mid {
    flex: 1;
    display: flex;
    justify-content: center;
    gap: 4px;
    padding-right: 20px;
}

.status-gap {
    width: 92px;
}

.status-size {
    width: 61px;
    padding-left: 4px;
    white-space: nowrap;
}

/* overlays */
.tooltip {
    position: absolute;
    left: 82px;
    top: 33px;
    padding: 1px 4px;
    background: #fff;
    border: 1px solid #777;
    color: #444;
    z-index: 2;
}

.pointer {
    position: absolute;
    left: 130px;
    top: 46px;
    z-index: 2;
}
```
